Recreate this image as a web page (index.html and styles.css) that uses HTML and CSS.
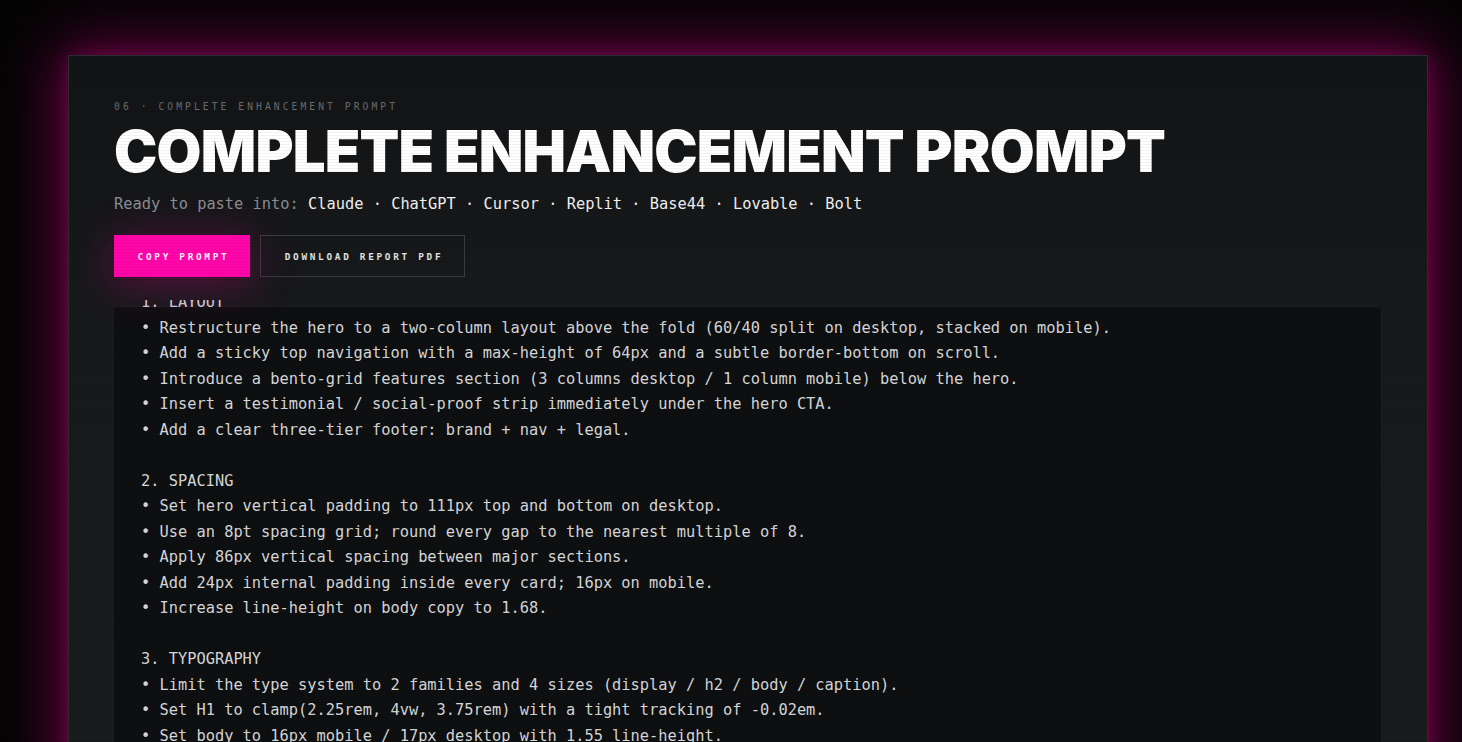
FILE: index.html
```html
<!DOCTYPE html>
<html lang="en">
<head>
<meta charset="utf-8">
<title>Complete Enhancement Prompt</title>
<link rel="stylesheet" href="styles.css">
</head>
<body>
<main class="page">
  <section class="card">
    <header class="card-head">
      <div class="eyebrow">06 · COMPLETE ENHANCEMENT PROMPT</div>
      <h1 class="title">COMPLETE ENHANCEMENT PROMPT</h1>
      <p class="targets">Ready to paste into: <span class="tools">Claude · ChatGPT · Cursor · Replit · Base44 · Lovable · Bolt</span></p>
      <div class="actions">
        <button class="btn btn-primary">COPY PROMPT</button>
        <button class="btn btn-ghost">DOWNLOAD REPORT PDF</button>
      </div>
    </header>
    <div class="prompt-box">
<pre class="prompt">1. LAYOUT
• Restructure the hero to a two-column layout above the fold (60/40 split on desktop, stacked on mobile).
• Add a sticky top navigation with a max-height of 64px and a subtle border-bottom on scroll.
• Introduce a bento-grid features section (3 columns desktop / 1 column mobile) below the hero.
• Insert a testimonial / social-proof strip immediately under the hero CTA.
• Add a clear three-tier footer: brand + nav + legal.

2. SPACING
• Set hero vertical padding to 111px top and bottom on desktop.
• Use an 8pt spacing grid; round every gap to the nearest multiple of 8.
• Apply 86px vertical spacing between major sections.
• Add 24px internal padding inside every card; 16px on mobile.
• Increase line-height on body copy to 1.68.

3. TYPOGRAPHY
• Limit the type system to 2 families and 4 sizes (display / h2 / body / caption).
• Set H1 to clamp(2.25rem, 4vw, 3.75rem) with a tight tracking of -0.02em.
• Set body to 16px mobile / 17px desktop with 1.55 line-height.</pre>
    </div>
  </section>
</main>
</body>
</html>
```
FILE: styles.css
```css
* { box-sizing: border-box; }

html, body {
  margin: 0;
  height: 100%;
  overflow: hidden;
}

body {
  background: #040404;
  font-family: "DejaVu Sans Mono", "Liberation Mono", monospace;
  color: #d8d9db;
  position: relative;
}

body::after {
  content: "";
  position: fixed;
  inset: 0;
  pointer-events: none;
  background: repeating-linear-gradient(180deg, rgba(0,0,0,0.05) 0 1px, transparent 1px 3px);
  z-index: 10;
}

.page {
  padding: 55px 0 0 68px;
}

.card {
  width: 1360px;
  min-height: 900px;
  border: 1px solid #2b2d30;
  background: linear-gradient(180deg, #121416 0px, #18191b 245px, #1a1b1d 700px);
  box-shadow: 0 0 60px 8px rgba(235, 0, 150, 0.45), 0 0 18px 0 rgba(200, 0, 130, 0.3);
}

.card-head {
  position: relative;
  z-index: 2;
  padding: 44px 45px 23px;
  background: linear-gradient(180deg, #121416 0px, #18191b 245px);
}

.eyebrow {
  font-size: 9.6px;
  line-height: 14px;
  letter-spacing: 3.1px;
  color: #6a6c6f;
}

.title {
  margin: 8px 0 0;
  font-family: "Inter", "Liberation Sans", sans-serif;
  font-weight: 900;
  font-size: 58px;
  line-height: 58px;
  letter-spacing: -0.8px;
  color: #ffffff;
}

.targets {
  margin: 12px 0 0;
  font-size: 15.35px;
  line-height: 24px;
  color: #8b8e93;
}

.tools {
  color: #f1f1f1;
}

.actions {
  display: flex;
  gap: 10px;
  margin-top: 19px;
}

.btn {
  display: flex;
  align-items: center;
  justify-content: center;
  height: 42px;
  padding: 0 0 0 3px;
  white-space: nowrap;
  font-family: "DejaVu Sans Mono", monospace;
  font-weight: bold;
  font-size: 9.4px;
  letter-spacing: 2.7px;
  border-radius: 0;
  cursor: pointer;
}

.btn-primary {
  width: 136px;
  background: #ff06aa;
  border: 1px solid #ff06aa;
  color: #fff0f9;
  box-shadow: 0 6px 40px 2px rgba(255, 0, 160, 0.28);
}

.btn-ghost {
  width: 205px;
  background: transparent;
  border: 1px solid #3b3c3f;
  color: #e2e2e2;
}

.prompt-box {
  position: relative;
  z-index: 1;
  margin: 6px 45px 0 44px;
  padding: 0 27px 40px;
  background: #0e0f11;
  border: 1px solid #1c1d20;
  border-radius: 4px 4px 0 0;
}

.prompt {
  margin: -17px 0 0;
  font-family: "DejaVu Sans Mono", monospace;
  font-size: 15.35px;
  line-height: 25.5px;
  color: #d6d7d9;
  white-space: pre;
}
```
